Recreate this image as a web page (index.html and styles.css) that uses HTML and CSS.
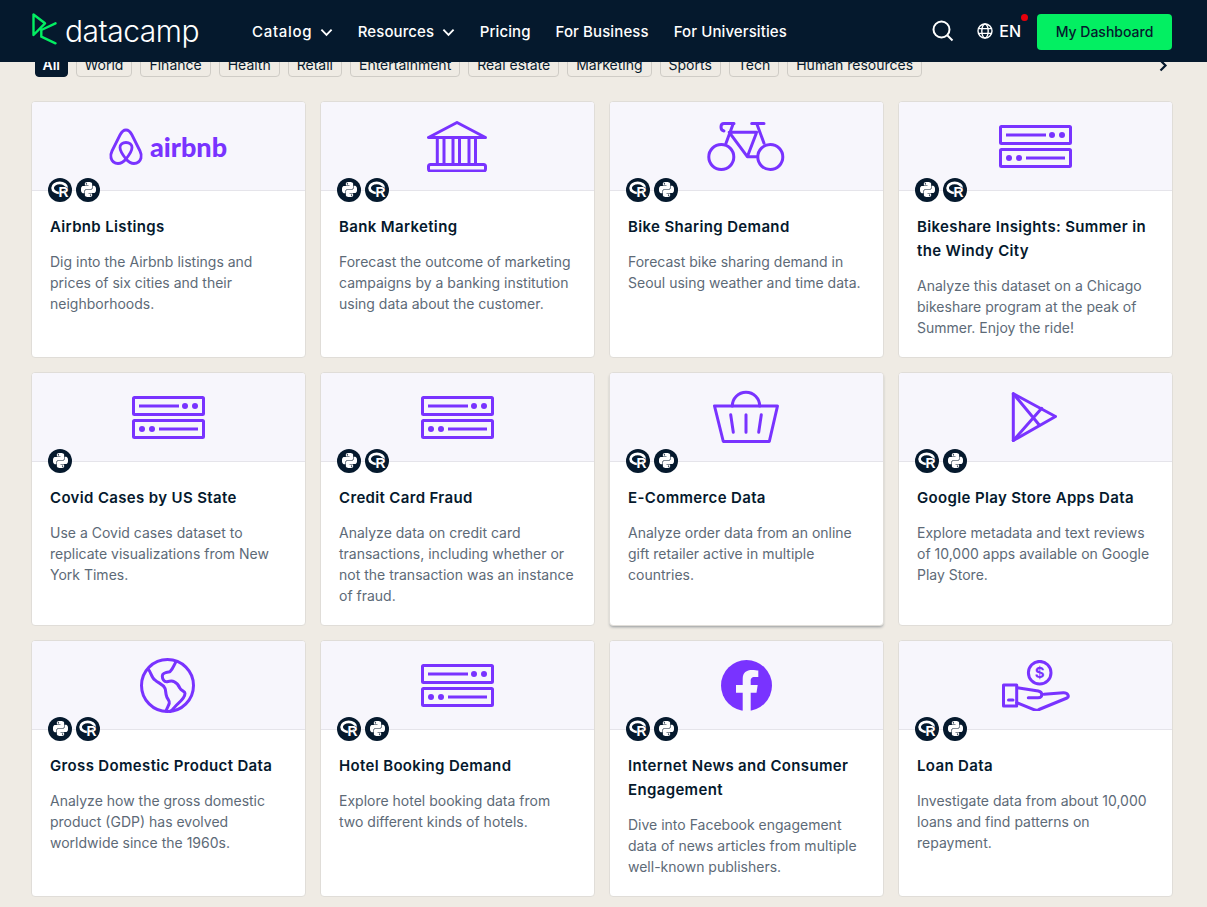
FILE: index.html
```html
<!DOCTYPE html>
<html lang="en">
<head>
<meta charset="utf-8">
<title>DataCamp datasets</title>
<link rel="stylesheet" href="styles.css">
</head>
<body>
<svg class="sprites" aria-hidden="true">
  <symbol id="python" viewBox="0 0 24 24"><path fill="#fff" d="M14.25.18l.9.2.73.26.59.3.45.32.34.34.25.34.16.33.1.3.04.26.02.2-.01.13V8.5l-.05.63-.13.55-.21.46-.26.38-.3.31-.33.25-.35.19-.35.14-.33.1-.3.07-.26.04-.21.02H8.77l-.69.05-.59.14-.5.22-.41.27-.33.32-.27.35-.2.36-.15.37-.1.35-.07.32-.04.27-.02.21v3.06H3.17l-.21-.03-.28-.07-.32-.12-.35-.18-.36-.26-.36-.36-.35-.46-.32-.59-.28-.73-.21-.88-.14-1.05-.05-1.23.06-1.22.16-1.04.24-.87.32-.71.36-.57.4-.44.42-.33.42-.24.4-.16.36-.1.32-.05.24-.01h.16l.06.01h8.16v-.83H6.18l-.01-2.75-.02-.37.05-.34.11-.31.17-.28.25-.26.31-.23.38-.2.44-.18.51-.15.58-.12.64-.1.71-.06.77-.04.84-.02 1.27.05zm-6.3 1.98l-.23.33-.08.41.08.41.23.34.33.22.41.09.41-.09.33-.22.23-.34.08-.41-.08-.41-.23-.33-.33-.22-.41-.09-.41.09zm13.09 3.95l.28.06.32.12.35.18.36.27.36.35.35.47.32.59.28.73.21.88.14 1.04.05 1.23-.06 1.23-.16 1.04-.24.86-.32.71-.36.57-.4.45-.42.33-.42.24-.4.16-.36.09-.32.05-.24.02-.16-.01h-8.22v.82h5.84l.01 2.76.02.36-.05.34-.11.31-.17.29-.25.25-.31.24-.38.2-.44.17-.51.15-.58.13-.64.09-.71.07-.77.04-.84.01-1.27-.04-1.07-.14-.9-.2-.73-.25-.59-.3-.45-.33-.34-.34-.25-.34-.16-.33-.1-.3-.04-.25-.02-.2.01-.13v-5.34l.05-.64.13-.54.21-.46.26-.38.3-.32.33-.24.35-.2.35-.14.33-.1.3-.06.26-.04.21-.02.13-.01h5.84l.69-.05.59-.14.5-.21.41-.28.33-.32.27-.35.2-.36.15-.36.1-.35.07-.32.04-.28.02-.21V6.07h2.09l.14.01zm-6.47 14.25l-.23.33-.08.41.08.41.23.33.33.23.41.08.41-.08.33-.23.23-.33.08-.41-.08-.41-.23-.33-.33-.23-.41-.08-.41.08z"/></symbol>
  <symbol id="rlang" viewBox="0 0 24 24"><ellipse cx="11" cy="10" rx="9" ry="6.4" fill="none" stroke="#fff" stroke-width="3.4"/><text x="9.5" y="21.500" font-family="Liberation Sans, sans-serif" font-weight="700" font-size="17.500" fill="#fff" stroke="#05192d" stroke-width="1.400" paint-order="stroke">R</text></symbol>
  <symbol id="server" viewBox="0 0 73 43"><g fill="none" stroke="#7933ff" stroke-width="3" stroke-linejoin="round"><rect x="1.500" y="1.500" width="70" height="17" rx="1"/><rect x="1.500" y="24.500" width="70" height="17" rx="1"/><path d="M7 10h40M27 33h39"/></g><g fill="#7933ff"><circle cx="53" cy="10" r="3"/><circle cx="63" cy="10" r="3"/><circle cx="10" cy="33" r="3"/><circle cx="20" cy="33" r="3"/></g></symbol>
</svg>

<header class="topbar">
  <a class="logo" href="#">
    <svg class="logo-mark" viewBox="0 0 25 32" width="25" height="32"><path d="M1.500 1.500V22L13 10.300zM23.500 10.300L9.300 17v6.700l14.200 6.600" fill="none" stroke="#03ef62" stroke-width="2.400" stroke-linejoin="round" stroke-linecap="round"/></svg>
    <span class="logo-word">datacamp</span>
  </a>
  <nav class="nav">
    <a class="nav-link nav-catalog" href="#">Catalog<svg class="chev" viewBox="0 0 14 9" width="13" height="9"><path d="M1.500 1.500L7 7l5.500-5.500" fill="none" stroke="#fff" stroke-width="2"/></svg></a>
    <a class="nav-link" href="#">Resources<svg class="chev" viewBox="0 0 14 9" width="13" height="9"><path d="M1.500 1.500L7 7l5.500-5.500" fill="none" stroke="#fff" stroke-width="2"/></svg></a>
    <a class="nav-link" href="#">Pricing</a>
    <a class="nav-link" href="#">For Business</a>
    <a class="nav-link" href="#">For Universities</a>
  </nav>
  <div class="top-actions">
    <svg class="search" viewBox="0 0 22 22" width="22" height="22"><circle cx="9.500" cy="9.500" r="8" fill="none" stroke="#fff" stroke-width="2"/><path d="M15.500 15.500l5 5" stroke="#fff" stroke-width="2"/></svg>
    <div class="lang">
      <svg viewBox="0 0 16 16" width="16" height="16"><g fill="none" stroke="#fff" stroke-width="1.400"><circle cx="8" cy="8" r="7"/><ellipse cx="8" cy="8" rx="3.200" ry="7"/><path d="M1.400 5.600h13.200M1.400 10.400h13.200"/></g></svg>
      <span>EN</span>
      <i class="dot"></i>
    </div>
    <a class="cta" href="#">My Dashboard</a>
  </div>
</header>

<main class="page">
  <div class="filters">
    <div class="chips">
      <span class="chip chip-on">All</span>
      <span class="chip">World</span>
      <span class="chip">Finance</span>
      <span class="chip">Health</span>
      <span class="chip">Retail</span>
      <span class="chip">Entertainment</span>
      <span class="chip">Real estate</span>
      <span class="chip">Marketing</span>
      <span class="chip">Sports</span>
      <span class="chip">Tech</span>
      <span class="chip">Human resources</span>
    </div>
    <svg class="next" viewBox="0 0 9 13" width="9" height="13"><path d="M1.500 1.500L6.500 6.500l-5 5" fill="none" stroke="#05192d" stroke-width="2.200"/></svg>
  </div>

  <section class="grid">
    <article class="card">
      <div class="card-head">
        <div class="airbnb">
          <svg viewBox="0 0 34 37" width="36" height="37"><g fill="none" stroke="#7933ff" stroke-width="2.800"><path d="M17 2C14 2 12.500 4 11 7L3 23C1.500 26 1.500 28 2 30C3 33.500 6 35.500 9 35.500C12 35.500 14.500 34 17 31C19.500 34 22 35.500 25 35.500C28 35.500 31 33.500 32 30C32.500 28 32.500 26 31 23L23 7C21.500 4 20 2 17 2Z"/><path d="M17 31C13 26 11 22.500 11 19.500C11 16.500 13.500 14.500 17 14.500C20.500 14.500 23 16.500 23 19.500C23 22.500 21 26 17 31Z"/></g></svg>
          <span class="airbnb-word">airbnb</span>
        </div>
        <div class="langs"><span class="badge"><svg class="r"><use href="#rlang"/></svg></span><span class="badge"><svg class="py"><use href="#python"/></svg></span></div>
      </div>
      <div class="card-body"><h3>Airbnb Listings</h3><p>Dig into the Airbnb listings and prices of six cities and their neighborhoods.</p></div>
    </article>

    <article class="card">
      <div class="card-head">
        <svg class="ico" viewBox="0 0 60 51" width="60" height="51"><g fill="none" stroke="#7933ff" stroke-width="3" stroke-linejoin="round" stroke-linecap="round"><path d="M30 1.500L1.500 16.500H58.500Z"/><path d="M10.300 17V43M17 17V43M26 17V43M32.500 17V43M42 17V43M48.500 17V43"/><rect x="1.500" y="43.500" width="57" height="6.500" rx="2"/></g></svg>
        <div class="langs"><span class="badge"><svg class="py"><use href="#python"/></svg></span><span class="badge"><svg class="r"><use href="#rlang"/></svg></span></div>
      </div>
      <div class="card-body"><h3>Bank Marketing</h3><p>Forecast the outcome of marketing campaigns by a banking institution using data about the customer.</p></div>
    </article>

    <article class="card">
      <div class="card-head">
        <svg class="ico" viewBox="0 0 78 49" width="78" height="49"><g fill="none" stroke="#7933ff" stroke-width="3" stroke-linejoin="round" stroke-linecap="round"><circle cx="14.300" cy="35" r="12.500"/><circle cx="63.300" cy="35" r="12.500"/><path d="M27 1.600H17C13 1.600 13 8 17 9"/><path d="M26.300 1.600L19 21.300M22.300 10.300H49.700M22.300 10.300L40.300 34.700H50M49.700 10.300L40.300 34.700M49.700 1.600L57 21.300M44.700 1.600H57"/></g></svg>
        <div class="langs"><span class="badge"><svg class="r"><use href="#rlang"/></svg></span><span class="badge"><svg class="py"><use href="#python"/></svg></span></div>
      </div>
      <div class="card-body"><h3>Bike Sharing Demand</h3><p>Forecast bike sharing demand in Seoul using weather and time data.</p></div>
    </article>

    <article class="card">
      <div class="card-head">
        <svg class="server"><use href="#server"/></svg>
        <div class="langs"><span class="badge"><svg class="py"><use href="#python"/></svg></span><span class="badge"><svg class="r"><use href="#rlang"/></svg></span></div>
      </div>
      <div class="card-body"><h3>Bikeshare Insights: Summer in the Windy City</h3><p>Analyze this dataset on a Chicago bikeshare program at the peak of Summer. Enjoy the ride!</p></div>
    </article>

    <article class="card">
      <div class="card-head">
        <svg class="server"><use href="#server"/></svg>
        <div class="langs"><span class="badge"><svg class="py"><use href="#python"/></svg></span></div>
      </div>
      <div class="card-body"><h3>Covid Cases by US State</h3><p>Use a Covid cases dataset to replicate visualizations from New York Times.</p></div>
    </article>

    <article class="card">
      <div class="card-head">
        <svg class="server"><use href="#server"/></svg>
        <div class="langs"><span class="badge"><svg class="py"><use href="#python"/></svg></span><span class="badge"><svg class="r"><use href="#rlang"/></svg></span></div>
      </div>
      <div class="card-body"><h3>Credit Card Fraud</h3><p>Analyze data on credit card transactions, including whether or not the transaction was an instance of fraud.</p></div>
    </article>

    <article class="card card-hover">
      <div class="card-head">
        <svg class="ico ico-basket" viewBox="0 0 66 54" width="66" height="54"><g fill="none" stroke="#7933ff" stroke-width="3" stroke-linejoin="round" stroke-linecap="round"><path d="M1.500 17H64.500L56.300 52.500H10.300Z"/><path d="M19.300 17A13.700 13.700 0 0 1 46.700 17"/><path d="M17.700 25.700L20.300 43.300M33 25.700V43.300M48.300 25.700L45.700 43.300"/></g></svg>
        <div class="langs"><span class="badge"><svg class="r"><use href="#rlang"/></svg></span><span class="badge"><svg class="py"><use href="#python"/></svg></span></div>
      </div>
      <div class="card-body"><h3>E-Commerce Data</h3><p>Analyze order data from an online gift retailer active in multiple countries.</p></div>
    </article>

    <article class="card">
      <div class="card-head">
        <svg class="ico-play" viewBox="0 0 46 50" width="46" height="50"><g fill="none" stroke="#7933ff" stroke-width="3" stroke-linejoin="round" stroke-linecap="round"><path d="M2.300 1.700L44.500 24.500L2.300 48.500Z"/><path d="M2.300 1.700L28.300 33M2.300 48.500L30.700 16.300"/></g></svg>
        <div class="langs"><span class="badge"><svg class="r"><use href="#rlang"/></svg></span><span class="badge"><svg class="py"><use href="#python"/></svg></span></div>
      </div>
      <div class="card-body"><h3>Google Play Store Apps Data</h3><p>Explore metadata and text reviews of 10,000 apps available on Google Play Store.</p></div>
    </article>

    <article class="card">
      <div class="card-head">
        <svg class="ico" viewBox="0 0 55 55" width="55" height="55"><g fill="none" stroke="#7933ff" stroke-width="3" stroke-linejoin="round" stroke-linecap="round"><circle cx="27.500" cy="27.500" r="26"/><path d="M8.300 11.300C11 14 11.500 20 15 22C18 25 23 26 25 30.300C26 33 25.500 36 26.700 38.700C27.500 41 30 43 29.300 45.300C28.500 48 27 50 26 53"/><path d="M36 3.700C34 7 33 11 30 13.700C27 14 22.300 15 22.300 18C22.300 21 24 24 27 23.700C30 23 33 23 34 23.700C37 25 39 28 40 30.300C41 33 45 33 45 35.300C45 39 41 43 38.300 45.300C35 48 33 52 30 53.700"/></g></svg>
        <div class="langs"><span class="badge"><svg class="py"><use href="#python"/></svg></span><span class="badge"><svg class="r"><use href="#rlang"/></svg></span></div>
      </div>
      <div class="card-body"><h3>Gross Domestic Product Data</h3><p>Analyze how the gross domestic product (GDP) has evolved worldwide since the 1960s.</p></div>
    </article>

    <article class="card">
      <div class="card-head">
        <svg class="server"><use href="#server"/></svg>
        <div class="langs"><span class="badge"><svg class="r"><use href="#rlang"/></svg></span><span class="badge"><svg class="py"><use href="#python"/></svg></span></div>
      </div>
      <div class="card-body"><h3>Hotel Booking Demand</h3><p>Explore hotel booking data from two different kinds of hotels.</p></div>
    </article>

    <article class="card">
      <div class="card-head">
        <svg viewBox="0 0 51 51" width="51" height="51"><circle cx="25.500" cy="25.500" r="25.500" fill="#7933ff"/><path fill="#f7f6fc" d="M21.700 51V32.700H15V25H21.700V19C21.700 12.500 25.500 10 31 10C33.500 10 36 10.400 37.300 10.600V17H33.500C30.500 17 29.700 19 29.700 21V25H36.700L35.500 32.700H29.700V51Z"/></svg>
        <div class="langs"><span class="badge"><svg class="r"><use href="#rlang"/></svg></span><span class="badge"><svg class="py"><use href="#python"/></svg></span></div>
      </div>
      <div class="card-body"><h3>Internet News and Consumer Engagement</h3><p>Dive into Facebook engagement data of news articles from multiple well-known publishers.</p></div>
    </article>

    <article class="card">
      <div class="card-head">
        <svg viewBox="0 0 68 51" width="68" height="51"><g fill="none" stroke="#7933ff" stroke-width="3" stroke-linejoin="round" stroke-linecap="round"><circle cx="37.700" cy="12.700" r="11.300"/><rect x="1.500" y="25" width="13.200" height="21"/><path d="M6.500 40H11"/><path d="M15.300 27.700L36.300 31C41 32 41 37.700 36 37.700H26.300"/><path d="M42 34.300L61.300 32.700C66 32.500 67.500 36.500 65 38L37 49.500C35.500 50.300 33.500 50.300 32 49.700L14.700 42.700"/></g><text class="dollar" x="37.700" y="18">$</text></svg>
        <div class="langs"><span class="badge"><svg class="r"><use href="#rlang"/></svg></span><span class="badge"><svg class="py"><use href="#python"/></svg></span></div>
      </div>
      <div class="card-body"><h3>Loan Data</h3><p>Investigate data from about 10,000 loans and find patterns on repayment.</p></div>
    </article>
  </section>
</main>
</body>
</html>
```
FILE: styles.css
```css
* { box-sizing: border-box; }
html, body { margin: 0; padding: 0; }
body {
  background: #efebe4;
  color: #05192d;
  font-family: Inter, "Liberation Sans", sans-serif;
}
a { color: inherit; text-decoration: none; }
.sprites { display: none; }

.topbar {
  position: sticky;
  top: 0;
  z-index: 5;
  height: 62px;
  background: #05192d;
  color: #fff;
  display: flex;
  align-items: center;
  padding: 0 35px 0 32px;
}
.logo { display: flex; align-items: center; width: 220px; flex: none; }
.logo-mark { flex: none; margin: 0 8px 4px 0; }
.logo-word {
  font-family: Inter, sans-serif;
  font-weight: 300;
  font-size: 30px;
  letter-spacing: -.5px;
  line-height: 32px;
}
.nav { display: flex; align-items: center; gap: 25px; font-size: 15px; font-weight: 500; letter-spacing: .1px; }
.nav-link { display: flex; align-items: center; gap: 7.500px; }
.nav-catalog { letter-spacing: .7px; }
.chev { flex: none; margin-top: 2px; }
.top-actions { margin-left: auto; display: flex; align-items: center; }
.search { margin-right: 23px; }
.lang { position: relative; display: flex; align-items: center; gap: 6px; font-size: 16px; font-weight: 500; margin-right: 16px; }
.dot {
  position: absolute;
  right: -7px;
  top: -7px;
  width: 7px;
  height: 7px;
  border-radius: 50%;
  background: #e8000b;
}
.cta {
  width: 135px;
  height: 36px;
  margin-top: 2px;
  padding-bottom: 1px;
  border-radius: 4px;
  background: #03ef62;
  color: #05192d;
  font-size: 14px;
  font-weight: 500;
  display: flex;
  align-items: center;
  justify-content: center;
}

.page { padding: 0 34px 10px 31px; }
.filters {
  display: flex;
  align-items: center;
  justify-content: space-between;
  margin-top: -9px;
  padding-left: 4px;
}
.chips { display: flex; gap: 8px; }
.chip {
  height: 24px;
  padding: 0 8px;
  border: 1px solid #cfccc6;
  border-radius: 4px;
  font-size: 14px;
  line-height: 22px;
  color: #05192d;
}
.chip-on { background: #05192d; border-color: #05192d; color: #fff; font-weight: 600; padding: 0 6.500px; }
.next { margin-right: 5px; }

.grid {
  display: grid;
  grid-template-columns: repeat(4, 275px);
  column-gap: 14px;
  row-gap: 14.600px;
  margin-top: 24.200px;
}
.card {
  position: relative;
  background: #fff;
  border: 1px solid #e0ddd8;
  border-radius: 4px;
}
.card-hover { box-shadow: 0 2px 3px -1px rgba(5, 25, 45, .4); }
.card-head {
  position: relative;
  height: 89px;
  background: #f7f6fc;
  border-bottom: 1px solid #e5e4ea;
  border-radius: 3px 3px 0 0;
  display: flex;
  align-items: center;
  justify-content: center;
}
.server { width: 73px; height: 43px; }
.ico { margin-right: 2px; }
.ico-basket { margin-bottom: 2px; }
.ico-play { margin-right: 3px; }
.airbnb { display: flex; align-items: center; gap: 6px; margin-right: 2px; }
.airbnb-word {
  font-family: Lato, sans-serif;
  font-weight: 900;
  font-size: 27px;
  line-height: 37px;
  color: #7933ff;
}
.dollar {
  fill: #7933ff;
  font-family: Inter, sans-serif;
  font-weight: 700;
  font-size: 15px;
  text-anchor: middle;
}
.langs {
  position: absolute;
  left: 16px;
  bottom: -11.500px;
  display: flex;
  gap: 4px;
  z-index: 1;
}
.badge {
  width: 24px;
  height: 24px;
  border-radius: 50%;
  background: #05192d;
  display: flex;
  align-items: center;
  justify-content: center;
}
.badge .py { width: 15px; height: 15px; }
.badge .r { width: 19px; height: 19px; }
.card-body { padding: 24px 18px 18.500px; }
.card-body h3 {
  margin: 0 0 12px;
  font-size: 15px;
  font-weight: 600;
  letter-spacing: .35px;
  line-height: 24px;
  color: #05192d;
}
.card-body p {
  margin: 0;
  font-size: 14px;
  line-height: 21px;
  color: #5d6a77;
}
```
